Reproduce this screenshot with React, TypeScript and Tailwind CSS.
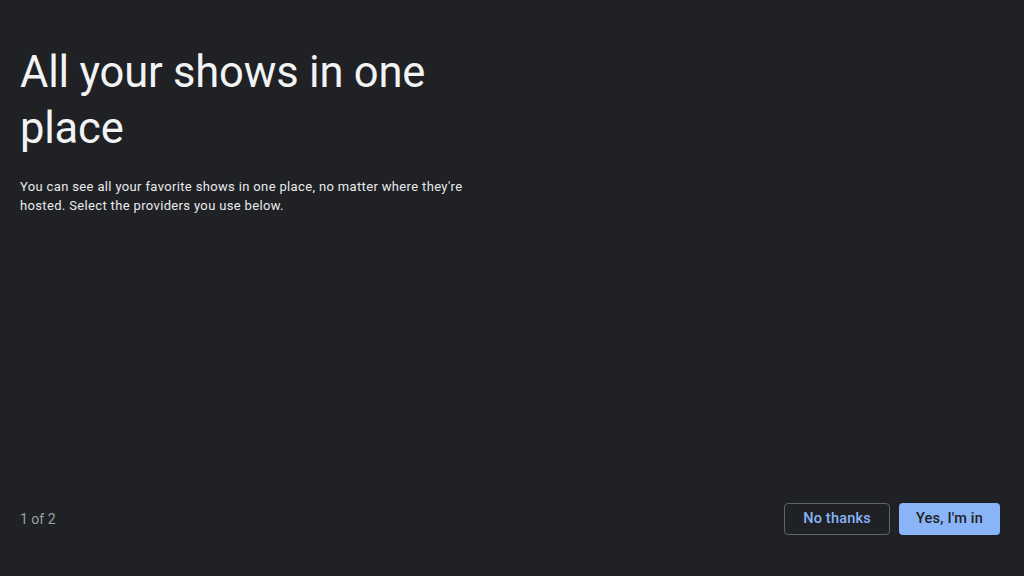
import React from "react";

export default function App() {
  return (
    <div
      className="w-[1024px] h-[576px] bg-[#202124] flex flex-col justify-between px-5 pt-[45px] pb-[41px]"
      style={{ fontFamily: "Roboto, 'Open Sans', sans-serif" }}
    >
      <div className="flex flex-col">
        <h1 className="text-[43.5px] leading-[56px] text-[#f1f3f4] font-normal w-[460px] tracking-[-0.2px]">
          All your shows in one place
        </h1>
        <p className="mt-[20px] text-[13px] leading-[19px] text-[#e8eaed] w-[460px] tracking-[0.35px]">
          You can see all your favorite shows in one place, no matter where they're hosted. Select the providers you use below.
        </p>
      </div>
      <div className="flex items-center justify-between">
        <span className="text-[14px] text-[#9aa0a6]">1 of 2</span>
        <div className="flex items-center gap-[9px] pr-[4px]">
          <button className="h-[32px] w-[106px] rounded-[4px] border border-[#5f6368] text-[14.5px] font-medium text-[#8ab4f8] tracking-[0.2px]">
            No thanks
          </button>
          <button className="h-[32px] w-[101px] rounded-[4px] bg-[#8ab4f8] text-[14.5px] font-medium text-[#202124] tracking-[0.2px]">
            Yes, I'm in
          </button>
        </div>
      </div>
    </div>
  );
}
